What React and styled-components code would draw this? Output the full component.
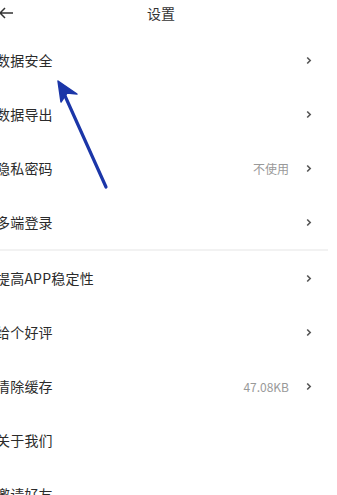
import React from "react";
import styled, { createGlobalStyle } from "styled-components";

const Global = createGlobalStyle`
  html, body { margin: 0; padding: 0; background: #fff; }
  body { font-family: "Noto Sans CJK SC", "Noto Sans", sans-serif; overflow: hidden; }
`;

const Page = styled.div`
  position: relative;
  width: 337px;
  height: 495px;
  overflow: hidden;
  background: #fff;
`;

const Inner = styled.div`
  margin-left: -4px;
  width: 332px;
`;

const Header = styled.div`
  height: 33px;
  display: flex;
  align-items: center;
  justify-content: center;
  position: relative;
`;

const Back = styled.div`
  position: absolute;
  left: 0;
  top: 3px;
  width: 20px;
  height: 20px;
  display: flex;
  align-items: center;
`;

const Title = styled.div`
  font-size: 14px;
  color: #333;
  margin-top: -8px;
  margin-left: -2px;
`;

const Row = styled.div`
  height: 54px;
  display: flex;
  align-items: center;
  padding-right: 16px;
`;

const Label = styled.div`
  flex: 1;
  font-size: 14px;
  color: #2b2b2b;
  letter-spacing: 0.2px;
`;

const Value = styled.div`
  font-size: 12px;
  color: #999;
  margin-right: 17px;
`;

const Chevron = styled.svg`
  width: 6px;
  height: 9px;
`;

const Divider = styled.div`
  height: 2px;
  background: #f2f2f2;
`;

const Arrow = styled.svg`
  position: absolute;
  left: 0;
  top: 0;
  pointer-events: none;
`;

const Chev = () => (
  <Chevron viewBox="0 0 6 9">
    <path d="M1.2 1.5 L4.2 4.5 L1.2 7.5" fill="none" stroke="#555" strokeWidth="1.6" />
  </Chevron>
);

const groupA = [
  { label: "数据安全" },
  { label: "数据导出" },
  { label: "隐私密码", value: "不使用" },
  { label: "多端登录" },
];
const groupB = [
  { label: "提高APP稳定性" },
  { label: "给个好评" },
  { label: "清除缓存", value: "47.08KB" },
  { label: "关于我们", noChev: true },
  { label: "邀请好友", noChev: true },
];

const Item = ({ label, value, noChev }) => (
  <Row>
    <Label>{label}</Label>
    {value && <Value>{value}</Value>}
    {!noChev && <Chev />}
  </Row>
);

export default function App() {
  return (
    <Page>
      <Global />
      <Inner>
        <Header>
          <Back>
            <svg width="18" height="14" viewBox="0 0 18 14">
              <path d="M17 7 H4 M9 2 L4 7 L9 12" fill="none" stroke="#333" strokeWidth="1.5" />
            </svg>
          </Back>
          <Title>设置</Title>
        </Header>
        {groupA.map((it) => (
          <Item key={it.label} {...it} />
        ))}
        <Divider />
        {groupB.map((it) => (
          <Item key={it.label} {...it} />
        ))}
      </Inner>
      <Arrow width="337" height="495" viewBox="0 0 337 495">
        <path d="M106 187 L61 87" stroke="#1b36a8" strokeWidth="3.2" strokeLinecap="round" fill="none" />
        <path d="M58 81 L77 94 L67 93 L61 102 Z" fill="#1b36a8" stroke="#1b36a8" strokeWidth="1.5" strokeLinejoin="round" />
      </Arrow>
    </Page>
  );
}
